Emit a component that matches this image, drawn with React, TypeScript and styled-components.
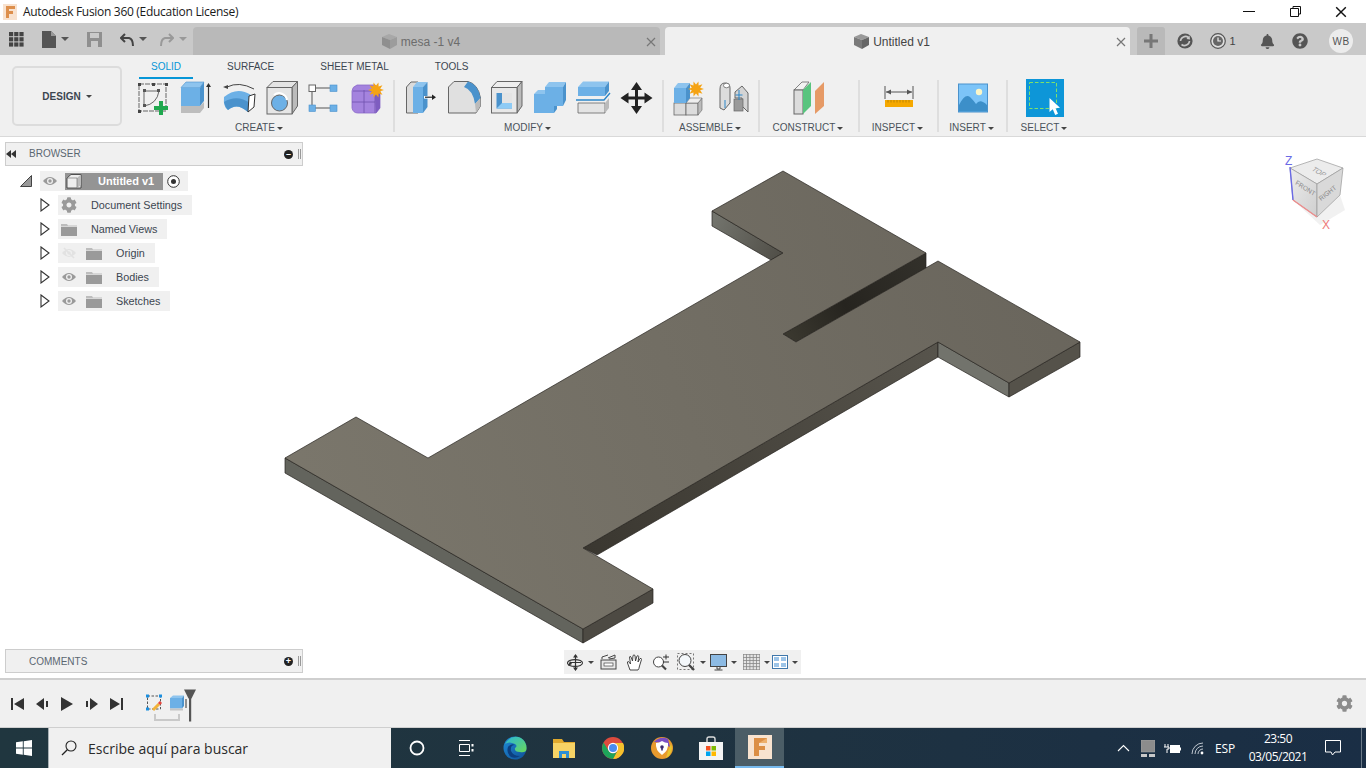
import React from "react";
import styled, { createGlobalStyle } from "styled-components";
import { FaBell, FaCog, FaQuestionCircle } from "react-icons/fa";

const GlobalStyle = createGlobalStyle`
  html, body { margin: 0; padding: 0; background: #fff; overflow: hidden; }
  body { font-family: "Liberation Sans", Arial, sans-serif; }
  svg { display: block; flex-shrink: 0; }
`;

const Page = styled.div`
  width: 1366px;
  height: 768px;
  display: flex;
  flex-direction: column;
  overflow: hidden;
`;

/* window title */
const TitleBar = styled.div`
  height: 23px;
  display: flex;
  align-items: center;
  padding: 0 2px 0 3px;
  background: #fff;
`;
const TitleText = styled.span`
  margin-left: 6px;
  font: 12px "Open Sans", sans-serif;
  letter-spacing: -0.3px;
  color: #1a1a1a;
`;
const WindowButtons = styled.div`
  margin-left: auto;
  display: flex;
`;
const WindowButton = styled.div`
  width: 46px;
  height: 23px;
  display: flex;
  align-items: center;
  justify-content: center;
`;

/* tabs row */
const TabBar = styled.div`
  height: 32px;
  display: flex;
  align-items: flex-end;
  background: #c9c9c9;
`;
const QuickTools = styled.div`
  width: 193px;
  height: 32px;
  padding-left: 9px;
  box-sizing: border-box;
  display: flex;
  align-items: center;
`;
const QuickTool = styled.div<{ $w: number }>`
  width: ${(p) => p.$w}px;
  display: flex;
  align-items: center;
  gap: 5px;
`;
const Caret = styled.span<{ $size?: number; $color?: string }>`
  display: inline-block;
  flex-shrink: 0;
  width: 0;
  height: 0;
  border-left: ${(p) => p.$size ?? 3.5}px solid transparent;
  border-right: ${(p) => p.$size ?? 3.5}px solid transparent;
  border-top: ${(p) => p.$size ?? 3.5}px solid ${(p) => p.$color ?? "#444"};
`;
const DocTab = styled.div<{ $active?: boolean; $w: number }>`
  width: ${(p) => p.$w}px;
  height: 28px;
  margin-right: 5px;
  padding: 1px 4px 0 0;
  box-sizing: border-box;
  display: grid;
  grid-template-columns: 1fr auto 1fr;
  align-items: center;
  border-radius: 4px 4px 0 0;
  background: ${(p) => (p.$active ? "#f0f0f0" : "#b9b9b9")};
  color: ${(p) => (p.$active ? "#444" : "#6c6c6c")};
  font-size: 12px;
`;
const DocTabLabel = styled.div`
  grid-column: 2;
  display: flex;
  align-items: center;
  gap: 3px;
  margin-right: 8px;
`;
const DocTabClose = styled.div`
  grid-column: 3;
  justify-self: end;
`;
const PlusTab = styled.div`
  width: 28px;
  height: 28px;
  margin-left: 2px;
  display: flex;
  align-items: center;
  justify-content: center;
  border-radius: 3px 3px 0 0;
  background: #b9b9b9;
`;
const StatusIcons = styled.div`
  height: 28px;
  display: flex;
  align-items: center;
`;
const StatusIcon = styled.div<{ $w: number }>`
  width: ${(p) => p.$w}px;
  display: flex;
  align-items: center;
  justify-content: center;
  gap: 3px;
  font-size: 11px;
  color: #444;
`;
const Avatar = styled.div`
  width: 24px;
  height: 24px;
  margin-left: 22px;
  border-radius: 50%;
  background: #ececec;
  color: #555;
  font-size: 10px;
  letter-spacing: 0.5px;
  display: flex;
  align-items: center;
  justify-content: center;
`;

/* ribbon */
const Toolbar = styled.div`
  height: 82px;
  box-sizing: border-box;
  display: flex;
  background: #f0f0f0;
  border-bottom: 1px solid #d9d9d9;
`;
const DesignButton = styled.div`
  width: 110px;
  height: 60px;
  margin: 11px 9px 0 12px;
  box-sizing: border-box;
  display: flex;
  align-items: center;
  justify-content: center;
  gap: 5px;
  border: 2px solid #dcdcdc;
  border-radius: 5px;
  font-size: 10px;
  font-weight: bold;
  color: #3c4650;
`;
const Ribbon = styled.div`
  display: flex;
  flex-direction: column;
`;
const RibbonTabs = styled.div`
  height: 25px;
  padding-left: 20px;
  display: flex;
  gap: 46px;
`;
const RibbonTab = styled.div<{ $active?: boolean }>`
  position: relative;
  line-height: 24px;
  height: 24px;
  font-size: 10px;
  color: ${(p) => (p.$active ? "#0696d7" : "#3c4650")};
  ${(p) =>
    p.$active &&
    `&::after {
      content: "";
      position: absolute;
      left: -12px;
      right: -12px;
      top: 22px;
      height: 2px;
      background: #0696d7;
    }`}
`;
const Groups = styled.div`
  display: flex;
`;
const Group = styled.div<{ $w: number; $first?: boolean }>`
  width: ${(p) => p.$w}px;
  height: 52px;
  box-sizing: border-box;
  padding-right: ${(p) => (p.$first ? 4 : 0)}px;
  display: flex;
  flex-direction: column;
  align-items: center;
  border-left: ${(p) => (p.$first ? "none" : "2px solid #dedede")};
`;
const GroupIcons = styled.div`
  height: 36px;
  display: flex;
`;
const IconSlot = styled.div<{ $w?: number }>`
  width: ${(p) => p.$w ?? 43}px;
  height: 36px;
  display: flex;
  align-items: center;
  justify-content: center;
`;
const GroupLabel = styled.div`
  margin: 6px 2px 0 0;
  display: flex;
  align-items: center;
  gap: 2px;
  font-size: 10px;
  line-height: 12px;
  color: #4a525a;
`;

/* viewport */
const Viewport = styled.div`
  position: relative;
  flex: 1;
  background: #fff;
  overflow: hidden;
`;
const ModelLayer = styled.svg`
  position: absolute;
  inset: 0;
`;
const SidePanels = styled.div`
  position: absolute;
  left: 5px;
  top: 5px;
  bottom: 5px;
  width: 298px;
  display: flex;
  flex-direction: column;
`;
const PanelHeader = styled.div`
  height: 24px;
  box-sizing: border-box;
  display: flex;
  align-items: center;
  background: #f0f0f0;
  border: 1px solid #cdcdcd;
  font-size: 10px;
  color: #5b6770;
`;
const PanelTitle = styled.span<{ $left: number; $raise?: number }>`
  margin-left: ${(p) => p.$left}px;
  margin-bottom: ${(p) => p.$raise ?? 0}px;
`;
const PanelEnd = styled.div`
  margin-left: auto;
  display: flex;
  align-items: center;
  gap: 5px;
  padding-right: 1px;
`;
const DotButton = styled.span`
  width: 9px;
  height: 9px;
  border-radius: 50%;
  background: #222;
  color: #fff;
  display: flex;
  align-items: center;
  justify-content: center;
  font-size: 9px;
  line-height: 9px;
  font-weight: bold;
`;
const Grip = styled.span`
  width: 1px;
  height: 10px;
  border: solid #999;
  border-width: 0 1px;
`;
const Tree = styled.div`
  margin-top: 5px;
  flex: 1;
  display: flex;
  flex-direction: column;
  gap: 4px;
`;
const TreeRow = styled.div<{ $depth: number }>`
  height: 20px;
  padding-left: ${(p) => (p.$depth ? 35 : 15)}px;
  display: flex;
  align-items: center;
`;
const Twisty = styled.div<{ $w: number }>`
  width: ${(p) => p.$w}px;
  display: flex;
  align-items: center;
`;
const Chip = styled.div`
  height: 20px;
  display: flex;
  align-items: center;
  padding: 0 10px 0 3px;
  background: #f0f0f0;
  font-size: 10.8px;
  color: #3c4650;
`;
const RootChip = styled(Chip)`
  padding: 0 8px 0 2px;
`;
const RootBar = styled.div`
  width: 98px;
  height: 17px;
  margin: 0 4px 0 7px;
  display: flex;
  align-items: center;
  background: #949494;
  color: #fff;
  font-size: 11px;
  font-weight: bold;
`;
const RootName = styled.span`
  margin-left: 15px;
`;
const ChipIcons = styled.div`
  display: flex;
  align-items: center;
  gap: 9px;
  margin-right: 14px;
`;
const NavBar = styled.div`
  position: absolute;
  left: 564px;
  bottom: 4px;
  width: 237px;
  height: 24px;
  box-sizing: border-box;
  padding-left: 3px;
  display: flex;
  align-items: center;
  background: #f0f0f0;
`;
const NavTool = styled.div<{ $w: number }>`
  width: ${(p) => p.$w}px;
  display: flex;
  align-items: center;
  gap: 4px;
`;
const CubeWidget = styled.svg`
  position: absolute;
  right: 16px;
  top: 13px;
`;

/* timeline */
const Timeline = styled.div`
  height: 50px;
  box-sizing: border-box;
  display: flex;
  align-items: center;
  padding: 0 13px 0 10px;
  background: #f0f0f0;
  border-top: 2px solid #cfcfcf;
  border-bottom: 1px solid #cfcfcf;
`;
const PlayControls = styled.div`
  display: flex;
  align-items: center;
  gap: 11px;
`;
const TimelineItems = styled.div`
  margin-left: 22px;
`;
const TimelineGear = styled.div`
  margin-left: auto;
  color: #8c8c8c;
  display: flex;
`;

/* windows taskbar */
const Taskbar = styled.div`
  height: 40px;
  display: flex;
  align-items: center;
  background: linear-gradient(90deg, #20363f 0%, #1f3340 50%, #1a2e45 100%);
`;
const StartButton = styled.div`
  width: 48px;
  height: 40px;
  display: flex;
  align-items: center;
  justify-content: center;
`;
const SearchBox = styled.div`
  width: 343px;
  height: 40px;
  margin-right: 1px;
  box-sizing: border-box;
  padding-left: 12px;
  display: flex;
  align-items: center;
  gap: 11px;
  background: #f0f0f0;
  border-left: 1px solid #a8b0b4;
  font: 14px "Open Sans", sans-serif;
  color: #2a2a2a;
`;
const TaskButton = styled.div<{ $active?: boolean }>`
  width: 49px;
  height: 40px;
  box-sizing: border-box;
  display: flex;
  align-items: center;
  justify-content: center;
  background: ${(p) => (p.$active ? "#4b5d66" : "transparent")};
  border-bottom: ${(p) => (p.$active ? "2px solid #76b9ed" : "none")};
`;
const Tray = styled.div`
  margin-left: auto;
  height: 40px;
  display: flex;
  align-items: center;
  color: #fff;
`;
const TrayCell = styled.div<{ $w: number; $mr?: number }>`
  width: ${(p) => p.$w}px;
  margin-right: ${(p) => p.$mr ?? 0}px;
  display: flex;
  align-items: center;
  justify-content: center;
  font: 12px "Open Sans", sans-serif;
  letter-spacing: -0.2px;
`;
const Clock = styled.div`
  width: 60px;
  margin-right: 7px;
  display: flex;
  flex-direction: column;
  align-items: center;
  font: 12px/18px "Open Sans", sans-serif;
  letter-spacing: -0.5px;
`;
const ShowDesktop = styled.div`
  width: 1px;
  height: 40px;
  margin: 0 4px 0 10px;
  background: #6b7a88;
`;

/* ---- icons ---- */
const S = (p: { w?: number; h?: number; v?: string; children: React.ReactNode }) => (
  <svg width={p.w ?? 36} height={p.h ?? 36} viewBox={p.v ?? `0 0 ${p.w ?? 36} ${p.h ?? 36}`}>
    {p.children}
  </svg>
);

const BL = "#6cb0e6";
const BD = "#4a92cc";
const LN = "#666";
const GR = "#dcdcdc";

const Star = ({ x, y, r }: { x: number; y: number; r: number }) => {
  const pts: string[] = [];
  for (let i = 0; i < 20; i++) {
    const a = (i * Math.PI) / 10;
    const rr = i % 2 ? r * 0.55 : r;
    pts.push(`${x + rr * Math.cos(a)},${y + rr * Math.sin(a)}`);
  }
  return <polygon points={pts.join(" ")} fill="#f5a314" />;
};

const SketchIcon = () => (
  <S>
    <rect x="4" y="4" width="27" height="27" fill="none" stroke={LN} strokeWidth="1" strokeDasharray="5 1" />
    {[[3, 3], [30, 3], [3, 30], [17, 3]].map(([x, y]) => (
      <rect key={`${x}${y}`} x={x} y={y} width="3" height="3" fill="#444" />
    ))}
    <path d="M9 11 L9 26 M9 26 Q22 24 24 11 M9 11 L24 11" fill="none" stroke={LN} strokeWidth="1" />
    <rect x="8" y="9" width="3" height="3" fill="#555" />
    <rect x="22" y="9" width="3" height="3" fill="#555" />
    <rect x="8" y="24" width="3" height="3" fill="#555" />
    <path d="M24 21h4v5h5v4h-5v5h-4v-5h-5v-4h5z" fill="#1fa84e" />
  </S>
);
const ExtrudeIcon = () => (
  <S>
    <path d="M3 26h19l4-4v6l-4 5H3z" fill="#bdbdbd" />
    <path d="M3 7.5 L8 2 H26 L22 7.5z" fill="#8ec4ee" stroke={BD} strokeWidth=".6" />
    <path d="M22 7.5 L26 2 V21 L22 26z" fill={BD} />
    <rect x="3" y="7.5" width="19" height="18.5" fill={BL} />
    <path d="M30.5 28V5" stroke="#333" strokeWidth="1.2" />
    <path d="M28 7l2.5-4 2.5 4z" fill="#333" />
  </S>
);
const RevolveIcon = () => (
  <S>
    <path d="M6 7 Q18 1 33 9" fill="none" stroke="#444" strokeWidth="1" />
    <path d="M2 7l5-2v4z" fill="#444" />
    <path d="M3 17 Q16 6 30 15 L31 19 L27 32 Q16 22 7 30 Q2 27 3 17z" fill={BL} />
    <path d="M3 22 Q4 27 7 30 Q16 22 27 32 L29 23 Q16 14 3 22z" fill={BD} />
    <path d="M28 16 L34 14 L33 27 L27 32z" fill="#fff" stroke="#333" strokeWidth="1" />
  </S>
);
const HoleIcon = () => (
  <S>
    <path d="M3 7.5 L9 1.5 H33.5 L28 7.5z" fill="#e4e4e4" stroke={LN} strokeWidth="1" />
    <path d="M28 7.5 L33.5 1.5 V26 L28 34z" fill="#bbb" stroke={LN} strokeWidth="1" />
    <rect x="3" y="7.5" width="25" height="26.5" fill="#e6e6e6" stroke={LN} strokeWidth="1" />
    <circle cx="15.5" cy="23" r="8" fill={BL} stroke={LN} strokeWidth="1" />
    <path d="M10 15 A8 8 0 0 1 23 20" fill="none" stroke="#fff" strokeWidth="2" />
  </S>
);
const FormIcon = () => (
  <S>
    <g transform="translate(-2 0)">
      <path d="M10 8h15M7 11v14M10 28h15" stroke="#555" strokeWidth="1" />
      <rect x="4" y="5" width="6.5" height="6.5" fill="#fff" stroke="#666" strokeWidth="1" />
      <rect x="25" y="5" width="7" height="6.5" fill={BL} stroke={BD} strokeWidth=".6" />
      <rect x="4" y="25" width="6.5" height="6.5" fill={BL} stroke={BD} strokeWidth=".6" />
      <rect x="25" y="25" width="7" height="6.5" fill={BL} stroke={BD} strokeWidth=".6" />
    </g>
  </S>
);
const PrimitiveIcon = () => (
  <S>
    <g transform="translate(-1 0)">
      <path d="M8 5 H26 L31 10 V28 L27 33 H9 Q4 33 3 28 V11 Q3 7 8 5z" fill="#a483de" stroke="#8a69c9" strokeWidth=".8" />
      <path d="M26 14 L31 10 V28 L27 33z" fill="#7e5dc0" />
      <path d="M3 22 H26 M15 10 V33 M4 11 H26 V33" fill="none" stroke="#6e50ad" strokeWidth=".8" />
      <Star x={27} y={10} r={8} />
    </g>
  </S>
);
const PressPullIcon = () => (
  <S>
    <path d="M3.5 7 L8 2 H15 V33 H3.5z" fill={GR} stroke={LN} strokeWidth="1" />
    <rect x="10" y="7" width="10" height="26" fill={BL} />
    <path d="M10 7 L14 2 H24.5 L20 7z" fill="#8ec4ee" />
    <path d="M20 7 L24.5 2 V27 L20 33z" fill={BD} />
    <rect x="21" y="16" width="8" height="2.6" fill="#fff" />
    <path d="M22 17.2h8" stroke="#222" strokeWidth="1.2" />
    <path d="M29 14.5l4 2.7-4 2.7z" fill="#222" />
  </S>
);
const FilletIcon = () => (
  <S>
    <path d="M2.5 7 L8 1.5 H22 Q32 4 34.5 18 V26 L30 33 H2.5z" fill="#e0e0e0" stroke={LN} strokeWidth="1" />
    <path d="M22 1.5 Q32 4 34.5 18 L29 24 Q27 10 18 7z" fill={BD} />
    <path d="M29 24 L34.5 18 V26 L30 33z" fill="#bbb" />
  </S>
);
const ShellIcon = () => (
  <S>
    <path d="M2.5 7.5 L8 1.5 H33 L28 7.5z" fill="#eee" stroke={LN} strokeWidth="1" />
    <path d="M28 7.5 L33 1.5 V26 L28 33z" fill="#bbb" stroke={LN} strokeWidth="1" />
    <rect x="2.5" y="7.5" width="25.5" height="25.5" fill="#e8e8e8" stroke={LN} strokeWidth="1" />
    <rect x="7.5" y="13" width="15.5" height="15.5" fill={BD} />
    <path d="M13 13 H23 V23 H13z" fill="#e4e4e4" />
    <path d="M13 23 H23 V28.5 H7.5z" fill="#8ecbf5" />
  </S>
);
const CombineIcon = () => (
  <S>
    <path d="M13 7 L17 2 H34 L31 7z" fill="#8ec4ee" />
    <path d="M2 14 L6 10 H14 V14z" fill="#8ec4ee" />
    <rect x="13" y="7" width="18" height="19" fill={BL} />
    <rect x="2" y="14" width="20" height="19" fill={BL} />
    <path d="M31 7 L34 2 V20 L31 26z" fill={BD} />
    <path d="M22 26 H25 V29 L22 33z" fill={BD} />
  </S>
);
const SplitIcon = () => (
  <S>
    <path d="M3 7 L8 1.5 H34 L30 7z" fill="#8ec4ee" />
    <rect x="3" y="7" width="27" height="9" fill={BL} />
    <path d="M30 7 L34 1.5 V11 L30 16z" fill={BD} />
    <path d="M1 20 H29 L35 13" fill="none" stroke="#2b86c9" strokeWidth="1.4" />
    <path d="M3 23 H30 V33 H3z" fill="#e4e4e4" stroke={LN} strokeWidth=".8" />
    <path d="M30 23 L34 18 V28 L30 33z" fill="#bbb" />
  </S>
);
const MoveIcon = () => (
  <S>
    <path d="M18.5 2 L24 10 H20 V16.5 H26.5 V12.5 L34.5 18 L26.5 23.5 V19.5 H20 V26 H24 L18.5 34 L13 26 H17 V19.5 H10.5 V23.5 L2.5 18 L10.5 12.5 V16.5 H17 V10 H13z" fill="#222" />
  </S>
);
const NewComponentIcon = () => (
  <S>
    <rect x="3" y="23" width="12" height="12" fill={GR} stroke={LN} strokeWidth=".8" />
    <rect x="15" y="23" width="12" height="12" fill={GR} stroke={LN} strokeWidth=".8" />
    <path d="M27 23 L31 18 V30 L27 35z" fill="#bbb" stroke={LN} strokeWidth=".6" />
    <path d="M15 23 L19 18 H31 L27 23z" fill="#eee" stroke={LN} strokeWidth=".6" />
    <rect x="3" y="8" width="12" height="15" fill={BL} />
    <path d="M3 8 L7 3 H19 L15 8z" fill="#8ec4ee" />
    <path d="M15 8 L19 3 V18 L15 23z" fill={BD} />
    <Star x={25} y={9} r={8} />
  </S>
);
const JointIcon = () => (
  <S>
    <path d="M5 9 Q5 3 10 3 Q15 3 15 8 V23 L9 30 L5 28z" fill="#dcdcdc" stroke={LN} strokeWidth="1" />
    <ellipse cx="11.5" cy="5.5" rx="3" ry="2.3" fill="#fff" stroke={LN} strokeWidth=".8" />
    <path d="M20 12 L27 6 L33 13 V32 L27 26 V18 L20 18z" fill="#d4d4d4" stroke={LN} strokeWidth="1" />
    <rect x="19" y="19" width="9" height="12" fill="#9a9a9a" stroke={LN} strokeWidth=".7" />
    <path d="M24 10v10M20.5 15h7" stroke="#2b86c9" strokeWidth="1" />
    <path d="M10 20v8" stroke="#2b86c9" strokeWidth="1" />
  </S>
);
const ConstructIcon = () => (
  <S>
    <path d="M3 10 L11 2 H18 L12 10z" fill="#f2f2f2" stroke={LN} strokeWidth=".8" />
    <rect x="3" y="10" width="9" height="24" fill="#dcdcdc" stroke={LN} strokeWidth="1" />
    <path d="M12 10 L20 2 V26 L12 34z" fill="#58c47e" />
    <path d="M24 11 L33 2 V26 L24 34z" fill="#e69a66" />
  </S>
);
const InspectIcon = () => (
  <S>
    <path d="M4 6v13M32 6v13M5 12h26" stroke="#555" strokeWidth="1" />
    <path d="M5 12l5-2.5v5zM31 12l-5-2.5v5z" fill="#555" />
    <rect x="4" y="20" width="28" height="7" fill="#f5a800" />
    <path d="M7 20v2.5M10 20v2.5M13 20v2.5M16 20v2.5M19 20v2.5M22 20v2.5M25 20v2.5M28 20v2.5" stroke="#a87700" strokeWidth=".7" />
  </S>
);
const InsertIcon = () => (
  <S>
    <rect x="3.5" y="4" width="29" height="28" fill="#7cc4f8" stroke="#4a92cc" strokeWidth="1" />
    <circle cx="24" cy="12" r="3.2" fill="#fbf6c8" />
    <path d="M4 25 Q10 13 15 17 Q19 21 21 24 Q25 18 32 25 V31.5 H4z" fill="#3c8fc9" />
  </S>
);
const SelectIcon = () => (
  <S w={38} h={38}>
    <rect width="38" height="38" fill="#0d96d8" />
    <rect x="3.5" y="3.5" width="27" height="26" fill="none" stroke="#7fe06a" strokeWidth="1" strokeDasharray="3.5 2" />
    <path d="M23.5 19 L23.5 33 L26.8 30.3 L29.2 36 L32 34.8 L29.6 29.2 L34 28.8z" fill="#fff" />
  </S>
);

const Cube = ({ light }: { light?: boolean }) => (
  <S w={17} h={17} v="0 0 17 17">
    <path d="M1 4 L8 1 L16 4 L9 7z" fill={light ? "#a8a8a8" : "#999"} />
    <path d="M1 4 L9 7 V16 L1 12z" fill={light ? "#8f8f8f" : "#7a7a7a"} />
    <path d="M9 7 L16 4 V12 L9 16z" fill={light ? "#9c9c9c" : "#666"} />
  </S>
);
const CloseX = ({ c = "#555", s = 10 }: { c?: string; s?: number }) => (
  <S w={s} h={s} v="0 0 10 10">
    <path d="M1 1 L9 9 M9 1 L1 9" stroke={c} strokeWidth="1.2" />
  </S>
);
const Eye = ({ off }: { off?: boolean }) => (
  <S w={16} h={12} v="0 0 16 12">
    <path d="M1 6 Q8 -2 15 6 Q8 14 1 6z" fill={off ? "#e2e2e2" : "#9a9a9a"} />
    <circle cx="8" cy="6" r="3" fill="#f0f0f0" />
    <circle cx="8" cy="6" r="1.7" fill={off ? "#e2e2e2" : "#9a9a9a"} />
    {off && <path d="M3 1 L13 11" stroke="#e2e2e2" strokeWidth="1.6" />}
  </S>
);
const Folder = () => (
  <S w={16} h={13} v="0 0 16 13">
    <path d="M0 1 H6 L7 2.5 H16 V3.5 H0z" fill="#bdbdbd" />
    <rect y="4" width="16" height="9" fill="#9a9a9a" />
  </S>
);
const TwistRight = () => (
  <S w={10} h={14} v="0 0 10 14">
    <path d="M1 1 L9 7 L1 13z" fill="#fff" stroke="#333" strokeWidth="1.1" />
  </S>
);

const File = () => (
  <S w={14} h={17} v="0 0 14 17">
    <path d="M0 0 H9 L14 5 V17 H0z" fill="#555" />
    <path d="M9 0 L14 5 H9z" fill="#999" />
  </S>
);

export default function App() {
  const top = "M783 171 L926 253 L783 334 L796 342 L938 261 L1080 342 L1009 383 L938 342 L583 548 L653 589 L583 629 L285 458 L356 417 L428 458 L783 253 L712 211z";
  return (
    <Page>
      <GlobalStyle />
      <TitleBar>
        <S w={14} h={16} v="0 0 14 16">
          <rect width="14" height="16" fill="#f8e2cf" />
          <path d="M3 2 H12 V5 H6 V7 H10 V10 H6 V14 H3z" fill="#dd8f4c" />
        </S>
        <TitleText>Autodesk Fusion 360 (Education License)</TitleText>
        <WindowButtons>
          <WindowButton>
            <S w={12} h={2} v="0 0 12 2"><rect width="12" height="1" fill="#111" /></S>
          </WindowButton>
          <WindowButton>
            <S w={11} h={11} v="0 0 11 11">
              <path d="M3 2.5 V.5 H10.5 V8 H8.5 M.5 2.5 H8.5 V10.5 H.5z" fill="none" stroke="#111" />
            </S>
          </WindowButton>
          <WindowButton><CloseX c="#111" s={12} /></WindowButton>
        </WindowButtons>
      </TitleBar>

      <TabBar>
        <QuickTools>
          <QuickTool $w={33}>
            <S w={15} h={15} v="0 0 15 15">
              {[0, 5.2, 10.4].flatMap((x) =>
                [0, 5.2, 10.4].map((y) => <rect key={`${x}-${y}`} x={x} y={y} width="4.2" height="4.2" fill="#444" />)
              )}
            </S>
          </QuickTool>
          <QuickTool $w={45}>
            <File />
            <Caret $size={4} $color="#555" />
          </QuickTool>
          <QuickTool $w={33}>
            <S w={15} h={15} v="0 0 15 15">
              <path d="M0 0 H15 V15 H0z" fill="#8f8f8f" />
              <rect x="3" y="1" width="9" height="5" fill="#c9c9c9" />
              <rect x="4" y="9" width="7" height="6" fill="#c9c9c9" />
            </S>
          </QuickTool>
          <QuickTool $w={40}>
            <S w={14} h={13} v="0 0 14 13">
              <path d="M5 1 L1 5 L5 9 M1 5 H9 Q13 6 13 13" fill="none" stroke="#444" strokeWidth="2" />
            </S>
            <Caret $size={4} $color="#555" />
          </QuickTool>
          <QuickTool $w={30}>
            <S w={14} h={13} v="0 0 14 13">
              <path d="M9 1 L13 5 L9 9 M13 5 H5 Q1 6 1 13" fill="none" stroke="#999" strokeWidth="2" />
            </S>
            <Caret $size={4} $color="#999" />
          </QuickTool>
        </QuickTools>
        <DocTab $w={467}>
          <DocTabLabel><Cube light />mesa -1 v4</DocTabLabel>
          <DocTabClose><CloseX c="#777" /></DocTabClose>
        </DocTab>
        <DocTab $w={465} $active>
          <DocTabLabel><Cube />Untitled v1</DocTabLabel>
          <DocTabClose><CloseX c="#777" /></DocTabClose>
        </DocTab>
        <PlusTab>
          <S w={14} h={14} v="0 0 14 14"><path d="M5.5 0h3v5.5H14v3H8.5V14h-3V8.5H0v-3h5.5z" fill="#777" /></S>
        </PlusTab>
        <StatusIcons>
          <StatusIcon $w={40}>
            <S w={16} h={16} v="0 0 16 16">
              <circle cx="8" cy="8" r="7.6" fill="#555" />
              <path d="M11.5 4.5 A5 5 0 0 0 3.5 8 M4.5 11.5 A5 5 0 0 0 12.5 8" fill="none" stroke="#c9c9c9" strokeWidth="1.6" />
              <path d="M9.5 6 L13 6.5 L12.5 2.5z" fill="#c9c9c9" />
            </S>
          </StatusIcon>
          <StatusIcon $w={36}>
            <S w={16} h={16} v="0 0 16 16">
              <circle cx="8" cy="8" r="7.3" fill="#ddd" stroke="#555" strokeWidth="1.2" />
              <circle cx="8" cy="8" r="5" fill="#666" />
              <path d="M8 4.5 V8 H11" fill="none" stroke="#eee" strokeWidth="1.2" />
            </S>
            1
          </StatusIcon>
          <StatusIcon $w={52}><FaBell size={15} color="#555" /></StatusIcon>
          <StatusIcon $w={14}><FaQuestionCircle size={16} color="#555" /></StatusIcon>
          <Avatar>WB</Avatar>
        </StatusIcons>
      </TabBar>

      <Toolbar>
        <DesignButton>DESIGN <Caret /></DesignButton>
        <Ribbon>
          <RibbonTabs>
            <RibbonTab $active>SOLID</RibbonTab>
            <RibbonTab>SURFACE</RibbonTab>
            <RibbonTab>SHEET METAL</RibbonTab>
            <RibbonTab>TOOLS</RibbonTab>
          </RibbonTabs>
          <Groups>
            <Group $w={262} $first>
              <GroupIcons>
                <IconSlot><SketchIcon /></IconSlot>
                <IconSlot><ExtrudeIcon /></IconSlot>
                <IconSlot><RevolveIcon /></IconSlot>
                <IconSlot><HoleIcon /></IconSlot>
                <IconSlot><FormIcon /></IconSlot>
                <IconSlot><PrimitiveIcon /></IconSlot>
              </GroupIcons>
              <GroupLabel>CREATE <Caret /></GroupLabel>
            </Group>
            <Group $w={269}>
              <GroupIcons>
                <IconSlot><PressPullIcon /></IconSlot>
                <IconSlot><FilletIcon /></IconSlot>
                <IconSlot><ShellIcon /></IconSlot>
                <IconSlot><CombineIcon /></IconSlot>
                <IconSlot><SplitIcon /></IconSlot>
                <IconSlot><MoveIcon /></IconSlot>
              </GroupIcons>
              <GroupLabel>MODIFY <Caret /></GroupLabel>
            </Group>
            <Group $w={96}>
              <GroupIcons>
                <IconSlot $w={44}><NewComponentIcon /></IconSlot>
                <IconSlot $w={44}><JointIcon /></IconSlot>
              </GroupIcons>
              <GroupLabel>ASSEMBLE <Caret /></GroupLabel>
            </Group>
            <Group $w={100}>
              <GroupIcons><IconSlot><ConstructIcon /></IconSlot></GroupIcons>
              <GroupLabel>CONSTRUCT <Caret /></GroupLabel>
            </Group>
            <Group $w={79}>
              <GroupIcons><IconSlot><InspectIcon /></IconSlot></GroupIcons>
              <GroupLabel>INSPECT <Caret /></GroupLabel>
            </Group>
            <Group $w={69}>
              <GroupIcons><IconSlot><InsertIcon /></IconSlot></GroupIcons>
              <GroupLabel>INSERT <Caret /></GroupLabel>
            </Group>
            <Group $w={76}>
              <GroupIcons><IconSlot><SelectIcon /></IconSlot></GroupIcons>
              <GroupLabel>SELECT <Caret /></GroupLabel>
            </Group>
          </Groups>
        </Ribbon>
      </Toolbar>

      <Viewport>
        <ModelLayer width="1366" height="541" viewBox="0 137 1366 541">
          <defs>
            <linearGradient id="topFace" x1="285" y1="560" x2="1080" y2="260" gradientUnits="userSpaceOnUse">
              <stop offset="0" stopColor="#7b776c" />
              <stop offset="1" stopColor="#69655c" />
            </linearGradient>
            <linearGradient id="notchWall" x1="712" y1="220" x2="783" y2="258" gradientUnits="userSpaceOnUse">
              <stop offset="0" stopColor="#73746d" />
              <stop offset="1" stopColor="#4f4d46" />
            </linearGradient>
            <linearGradient id="slotWall" x1="926" y1="255" x2="790" y2="338" gradientUnits="userSpaceOnUse">
              <stop offset="0" stopColor="#33312b" />
              <stop offset=".6" stopColor="#26241f" />
              <stop offset="1" stopColor="#3a382f" />
            </linearGradient>
            <linearGradient id="lowerWall" x1="938" y1="350" x2="585" y2="552" gradientUnits="userSpaceOnUse">
              <stop offset="0" stopColor="#57544c" />
              <stop offset="1" stopColor="#3a3730" />
            </linearGradient>
          </defs>
          <g stroke="#26241f" strokeWidth=".7" strokeLinejoin="round">
            <path d="M712 211 L783 253 L771 260 L712 226z" fill="url(#notchWall)" />
            <path d="M783 334 L926 253 L926 268 L796 342z" fill="url(#slotWall)" />
            <path d="M938 342 L938 357 L597 555 L583 548z" fill="url(#lowerWall)" />
            <path d="M938 342 L1009 383 L1009 397 L938 357z" fill="#72736c" />
            <path d="M1009 383 L1080 342 L1080 357 L1009 397z" fill="#55524a" />
            <path d="M285 458 L583 629 L583 643 L285 473z" fill="#63645d" />
            <path d="M583 629 L653 589 L653 603 L583 643z" fill="#4d4a43" />
            <path d={top} fill="url(#topFace)" />
          </g>
        </ModelLayer>

        <SidePanels>
          <PanelHeader>
            <S w={10} h={8} v="0 0 10 8"><path d="M5 0v8L0 4zM10 0v8L5 4z" fill="#333" /></S>
            <PanelTitle $left={13} $raise={2}>BROWSER</PanelTitle>
            <PanelEnd><DotButton>–</DotButton><Grip /></PanelEnd>
          </PanelHeader>
          <Tree>
            <TreeRow $depth={0}>
              <Twisty $w={20}>
                <S w={12} h={12} v="0 0 12 12"><path d="M11.5 .5 V11.5 H.5z" fill="#999" stroke="#333" strokeWidth=".9" /></S>
              </Twisty>
              <RootChip>
                <Eye />
                <RootBar>
                  <S w={18} h={17} v="0 0 18 17">
                    <path d="M2 5 L6 1.5 H16 V15 H2z" fill="#eee" stroke="#333" strokeWidth=".8" />
                    <path d="M12 5 L16 1.5 V12 L12 15z" fill="#bbb" />
                    <path d="M2 5h10v10" fill="none" stroke="#777" strokeWidth=".7" />
                  </S>
                  <RootName>Untitled v1</RootName>
                </RootBar>
                <S w={13} h={13} v="0 0 13 13">
                  <circle cx="6.5" cy="6.5" r="5.8" fill="#fff" stroke="#333" />
                  <circle cx="6.5" cy="6.5" r="2.5" fill="#333" />
                </S>
              </RootChip>
            </TreeRow>
            <TreeRow $depth={1}>
              <Twisty $w={18}><TwistRight /></Twisty>
              <Chip><ChipIcons><FaCog size={16} color="#9a9a9a" /></ChipIcons>Document Settings</Chip>
            </TreeRow>
            <TreeRow $depth={1}>
              <Twisty $w={18}><TwistRight /></Twisty>
              <Chip><ChipIcons><Folder /></ChipIcons>Named Views</Chip>
            </TreeRow>
            <TreeRow $depth={1}>
              <Twisty $w={18}><TwistRight /></Twisty>
              <Chip><ChipIcons><Eye off /><Folder /></ChipIcons>Origin</Chip>
            </TreeRow>
            <TreeRow $depth={1}>
              <Twisty $w={18}><TwistRight /></Twisty>
              <Chip><ChipIcons><Eye /><Folder /></ChipIcons>Bodies</Chip>
            </TreeRow>
            <TreeRow $depth={1}>
              <Twisty $w={18}><TwistRight /></Twisty>
              <Chip><ChipIcons><Eye /><Folder /></ChipIcons>Sketches</Chip>
            </TreeRow>
          </Tree>
          <PanelHeader>
            <PanelTitle $left={23}>COMMENTS</PanelTitle>
            <PanelEnd><DotButton>+</DotButton><Grip /></PanelEnd>
          </PanelHeader>
        </SidePanels>

        <NavBar>
          <NavTool $w={33}>
            <S w={17} h={17} v="0 0 17 17">
              <path d="M8.5 1v15M3 8.5h11" stroke="#333" strokeWidth="1.2" />
              <path d="M8.5 0l2.5 3.5h-5zM8.5 17l2.5-3.5h-5z" fill="#333" />
              <ellipse cx="8" cy="9" rx="7.5" ry="3.4" fill="none" stroke="#333" strokeWidth="1.1" />
              <path d="M1 12l2-5 2 3z" fill="#333" />
            </S>
            <Caret $size={3} />
          </NavTool>
          <NavTool $w={26}>
            <S w={17} h={16} v="0 0 17 16">
              <rect x="1" y="6" width="15" height="9" fill="#e9e9e9" stroke="#444" />
              <rect x="4" y="9" width="9" height="3" fill="#fff" stroke="#444" strokeWidth=".7" />
              <path d="M2 5 L2 3 L8 1 M8 4 L15 1 L15 4 L9 5" fill="none" stroke="#444" />
            </S>
          </NavTool>
          <NavTool $w={26}>
            <S w={17} h={17} v="0 0 17 17">
              <path d="M4 16 L1.5 9 Q1 7.5 2.5 7.5 L4.5 10 L3.5 3 Q4 1.5 5 3 L6.5 7 L7 1.5 Q8 .3 9 1.5 L9.5 7 L11 2 Q12 1 12.8 2.4 L12 8 L14 4.5 Q15.5 4 15.5 5.5 L13.5 12 Q13 15 12 16z" fill="#fff" stroke="#333" strokeWidth=".9" />
            </S>
          </NavTool>
          <NavTool $w={25}>
            <S w={18} h={17} v="0 0 18 17">
              <circle cx="6.5" cy="8" r="5" fill="#fff" stroke="#444" />
              <path d="M10 11.5 L14 15.5" stroke="#444" strokeWidth="2.2" />
              <path d="M11 3h6M14 0.5v5M11 8h6" stroke="#333" strokeWidth="1" />
            </S>
          </NavTool>
          <NavTool $w={33}>
            <S w={19} h={18} v="0 0 19 18">
              <rect x=".5" y=".5" width="16" height="16" fill="none" stroke="#777" strokeDasharray="2 2" />
              <circle cx="8" cy="7.5" r="6" fill="#f4f8fb" stroke="#444" />
              <path d="M12 12 L17 17" stroke="#444" strokeWidth="2.4" />
            </S>
            <Caret $size={3} />
          </NavTool>
          <NavTool $w={33}>
            <S w={17} h={17} v="0 0 17 17">
              <rect x=".5" y=".5" width="16" height="12" fill="#8dbbe4" stroke="#444" />
              <path d="M7 13v2h3v-2M4.5 16h8" stroke="#444" fill="none" />
            </S>
            <Caret $size={3} />
          </NavTool>
          <NavTool $w={29}>
            <S w={17} h={16} v="0 0 17 16">
              <rect width="17" height="16" fill="#888" />
              {[0, 1, 2, 3, 4].flatMap((x) =>
                [0, 1, 2, 3, 4].map((y) => (
                  <rect key={`${x}:${y}`} x={.7 + x * 3.3} y={.7 + y * 3.1} width="2.5" height="2.3" fill="#e4e4e4" />
                ))
              )}
            </S>
            <Caret $size={3} />
          </NavTool>
          <NavTool $w={26}>
            <S w={16} h={14} v="0 0 16 14">
              <rect x=".5" y=".5" width="15" height="13" fill="#fff" stroke="#3f77ab" />
              <rect x="2" y="2" width="5" height="4" fill="#9cc4e8" />
              <rect x="9" y="2" width="5" height="4" fill="#9cc4e8" />
              <rect x="2" y="8" width="5" height="4" fill="#9cc4e8" />
              <rect x="9" y="8" width="5" height="4" fill="#9cc4e8" />
            </S>
            <Caret $size={3} />
          </NavTool>
        </NavBar>

        <CubeWidget width="67" height="85" viewBox="1283 150 67 85">
          <defs>
            <linearGradient id="cubeLeft" x1="0" y1="0" x2="1" y2="1">
              <stop offset="0" stopColor="#ececec" />
              <stop offset="1" stopColor="#cfcfcf" />
            </linearGradient>
          </defs>
          <path d="M1293 200 L1317 217 L1340 195 L1345 210 L1320 225z" fill="#e8e8e8" opacity=".6" />
          <path d="M1317 159 L1343 168 L1317 184 L1290 168z" fill="#ececec" stroke="#999" strokeWidth=".7" />
          <path d="M1290 168 L1317 184 V217 L1293 200z" fill="url(#cubeLeft)" stroke="#999" strokeWidth=".7" />
          <path d="M1317 184 L1343 168 L1340 195 L1317 217z" fill="#d9d9d9" stroke="#999" strokeWidth=".7" />
          <path d="M1290 167 L1293 200" stroke="#6a6ae6" strokeWidth="1.4" />
          <path d="M1293 200 L1317 217" stroke="#ee8d8d" strokeWidth="1.4" />
          <text x="1285" y="165" fontSize="12" fill="#6a6ae6" fontFamily="Liberation Sans">Z</text>
          <text x="1322" y="229" fontSize="12" fill="#ee7a7a" fontFamily="Liberation Sans">X</text>
          <text fontSize="7" fill="#999" fontFamily="Liberation Sans" transform="translate(1311 170) rotate(30) skewX(-20)">TOP</text>
          <text fontSize="6.5" fill="#888" fontFamily="Liberation Sans" transform="translate(1295 184) rotate(28) skewY(5)">FRONT</text>
          <text fontSize="6.5" fill="#888" fontFamily="Liberation Sans" transform="translate(1321 201) rotate(-38)">RIGHT</text>
        </CubeWidget>
      </Viewport>

      <Timeline>
        <PlayControls>
          <S w={14} h={14} v="0 0 14 14"><path d="M1 1h2v12H1zM14 1v12L4 7z" fill="#333" /></S>
          <S w={14} h={14} v="0 0 14 14"><path d="M9 1v12L1 7zM11 4h2v6h-2z" fill="#333" /></S>
          <S w={14} h={14} v="0 0 14 14"><path d="M1 0v14l12-7z" fill="#333" /></S>
          <S w={14} h={14} v="0 0 14 14"><path d="M5 1v12l8-6zM1 4h2v6H1z" fill="#333" /></S>
          <S w={14} h={14} v="0 0 14 14"><path d="M0 1v12l10-6zM11 1h2v12h-2z" fill="#333" /></S>
        </PlayControls>
        <TimelineItems>
          <S w={54} h={44} v="0 0 54 44">
            <rect x="1.5" y="14" width="13" height="13" fill="none" stroke="#555" strokeDasharray="2.5 1.5" />
            <rect x="0" y="12.5" width="3" height="3" fill="#1b8fe0" />
            <rect x="13" y="12.5" width="3" height="3" fill="#1b8fe0" />
            <rect x="0" y="25.5" width="3" height="3" fill="#1b8fe0" />
            <path d="M7 28 L13 22" stroke="#f2b33a" strokeWidth="3" />
            <path d="M13 22l2-2" stroke="#e8453c" strokeWidth="3" />
            <path d="M24 16 L27 13.5 H38 L36 16z" fill="#8ec4ee" />
            <rect x="24" y="16" width="12" height="10.5" fill={BL} />
            <path d="M36 16 L38 13.5 V24 L36 26.5z" fill={BD} />
            <rect x="24" y="26.5" width="13" height="2" fill="#c4c4c4" />
            <path d="M40 26V17" stroke="#333" strokeWidth="1" />
            <path d="M38 7.5 H50 L45.5 16.5 H42.5z" fill="#555" />
            <rect x="43" y="12" width="2.2" height="27.5" fill="#555" />
            <path d="M9 32v6h24v-6" fill="none" stroke="#c9c9c9" strokeWidth="2" />
          </S>
        </TimelineItems>
        <TimelineGear><FaCog size={17} /></TimelineGear>
      </Timeline>

      <Taskbar>
        <StartButton>
          <S w={16} h={16} v="0 0 16 16">
            <path d="M0 2.3 L6.8 1.3 V7.5 H0z M7.7 1.2 L16 0 V7.5 H7.7z M0 8.5 H6.8 V14.7 L0 13.7z M7.7 8.5 H16 V16 L7.7 14.8z" fill="#fff" />
          </S>
        </StartButton>
        <SearchBox>
          <S w={16} h={16} v="0 0 16 16">
            <circle cx="10" cy="6" r="5" fill="none" stroke="#222" strokeWidth="1.1" />
            <path d="M6.3 9.7 L1 15" stroke="#222" strokeWidth="1.3" />
          </S>
          Escribe aquí para buscar
        </SearchBox>
        <TaskButton>
          <S w={16} h={16} v="0 0 16 16"><circle cx="8" cy="8" r="6.5" fill="none" stroke="#fff" strokeWidth="1.8" /></S>
        </TaskButton>
        <TaskButton>
          <S w={16} h={16} v="0 0 16 16">
            <path d="M1 .5H12M1 15.5H12M1.5 4.5H11.5V11.5H1.5z" fill="none" stroke="#fff" strokeWidth="1" />
            <rect x="13.5" y="4" width="2" height="2.5" fill="#fff" />
            <rect x="13.5" y="9" width="2" height="2.5" fill="#fff" />
          </S>
        </TaskButton>
        <TaskButton>
          <S w={24} h={24} v="0 0 24 24">
            <defs>
              <linearGradient id="edgeA" x1="0" y1="0" x2="1" y2="1">
                <stop offset="0" stopColor="#1f8bd6" />
                <stop offset="1" stopColor="#0f4f96" />
              </linearGradient>
              <linearGradient id="edgeB" x1="0" y1="0" x2="1" y2="1">
                <stop offset="0" stopColor="#2ab7d8" />
                <stop offset="1" stopColor="#6ad85a" />
              </linearGradient>
            </defs>
            <circle cx="12" cy="12" r="11.5" fill="url(#edgeA)" />
            <path d="M2 8 Q8 -2 18 2 Q24 6 23.5 13 Q23 17 17 16 Q11 16 12 12 Q15 10 12 8 Q6 5 2 8z" fill="url(#edgeB)" />
            <path d="M12 9 Q7 9 8 15 Q10 20 17 20 Q13 23 8 21 Q3 17 5 11 Q8 7 12 9z" fill="#0c3f80" />
          </S>
        </TaskButton>
        <TaskButton>
          <S w={22} h={19} v="0 0 22 19">
            <path d="M0 0 H9 L11 3 H22 V6 H0z" fill="#e0a92d" />
            <rect y="4" width="22" height="15" fill="#f6d365" />
            <path d="M6 12 H16 V19 H13 V15 H9 V19 H6z" fill="#2c8fd4" />
          </S>
        </TaskButton>
        <TaskButton>
          <S w={22} h={22} v="0 0 22 22">
            <circle cx="11" cy="11" r="11" fill="#dd4b3e" />
            <path d="M11 6 H21 A11 11 0 0 1 11 22 L15.5 13.5 A5 5 0 0 0 11 6z" fill="#f6c12c" />
            <path d="M1.5 5.5 L6.5 13.5 A5 5 0 0 0 15.5 13.5 L11 22 A11 11 0 0 1 1.5 5.5z" fill="#1da45a" />
            <circle cx="11" cy="11" r="5.2" fill="#fff" />
            <circle cx="11" cy="11" r="4" fill="#4a8bf0" />
          </S>
        </TaskButton>
        <TaskButton>
          <S w={22} h={22} v="0 0 22 22">
            <circle cx="11" cy="11" r="11" fill="#e89a2e" />
            <path d="M3 5 A11 11 0 0 1 17 2 L19 10 L11 6z" fill="#7a4ec4" />
            <path d="M20 7 A11 11 0 0 1 15 21 L17 14z" fill="#e8c52e" />
            <path d="M11 4 Q14 6 17 6 Q18 13 11 18 Q4 13 5 6 Q8 6 11 4z" fill="#fff" />
            <circle cx="11" cy="10" r="1.8" fill="#3d2a70" />
            <rect x="10.2" y="10" width="1.6" height="3.5" fill="#3d2a70" />
          </S>
        </TaskButton>
        <TaskButton>
          <S w={24} h={24} v="0 0 24 24">
            <path d="M8 7 V3 Q8 1 10 1 H14 Q16 1 16 3 V7" fill="none" stroke="#ddd" strokeWidth="1.4" />
            <rect y="6" width="24" height="18" fill="#f4f4f4" />
            <rect x="7" y="10" width="4.5" height="4.5" fill="#f25022" />
            <rect x="12.5" y="10" width="4.5" height="4.5" fill="#7fba00" />
            <rect x="7" y="15.5" width="4.5" height="4.5" fill="#00a4ef" />
            <rect x="12.5" y="15.5" width="4.5" height="4.5" fill="#ffb900" />
          </S>
        </TaskButton>
        <TaskButton $active>
          <S w={24} h={24} v="0 0 24 24">
            <rect width="24" height="24" fill="#f8e3cf" />
            <path d="M6 3 H19 V8 H11 V11 H17 V15 H11 V21 H6z" fill="#dc8f45" />
            <path d="M11 8 H19 V3z" fill="#edb06c" />
          </S>
        </TaskButton>
        <Tray>
          <TrayCell $w={25}>
            <S w={13} h={8} v="0 0 13 8"><path d="M1 7 L6.5 1.5 L12 7" fill="none" stroke="#fff" strokeWidth="1.1" /></S>
          </TrayCell>
          <TrayCell $w={24}>
            <S w={14} h={17} v="0 0 14 17">
              <rect width="14" height="12" fill="#8c8c8c" stroke="#aaa" strokeWidth=".5" />
              <rect y="14" width="6" height="3" fill="#c8c8c8" />
              <rect x="8" y="14" width="6" height="3" fill="#c8c8c8" />
            </S>
          </TrayCell>
          <TrayCell $w={24}>
            <S w={17} h={11} v="0 0 17 11">
              <rect x="6.5" y="2.5" width="9" height="7" fill="#fff" stroke="#fff" />
              <path d="M1 1v3M4 1v3M0 4h5v2H3v4" stroke="#fff" fill="none" />
              <rect x="16" y="4.5" width="1" height="3" fill="#fff" />
            </S>
          </TrayCell>
          <TrayCell $w={26}>
            <S w={13} h={13} v="0 0 13 13">
              <path d="M1 12 A11 11 0 0 1 12 1 M4 12 A8 8 0 0 1 12 4 M7 12 A5 5 0 0 1 12 7" fill="none" stroke="#cfd6dc" strokeWidth=".9" />
              <circle cx="11" cy="11" r="1.4" fill="#fff" />
            </S>
          </TrayCell>
          <TrayCell $w={30} $mr={8}>ESP</TrayCell>
          <Clock><span>23:50</span><span>03/05/2021</span></Clock>
          <TrayCell $w={36}>
            <S w={16} h={16} v="0 0 16 16">
              <path d="M.5 .5 H15.5 V12 H10 L7.5 15 L6 12 H.5z" fill="none" stroke="#fff" />
            </S>
          </TrayCell>
          <ShowDesktop />
        </Tray>
      </Taskbar>
    </Page>
  );
}
